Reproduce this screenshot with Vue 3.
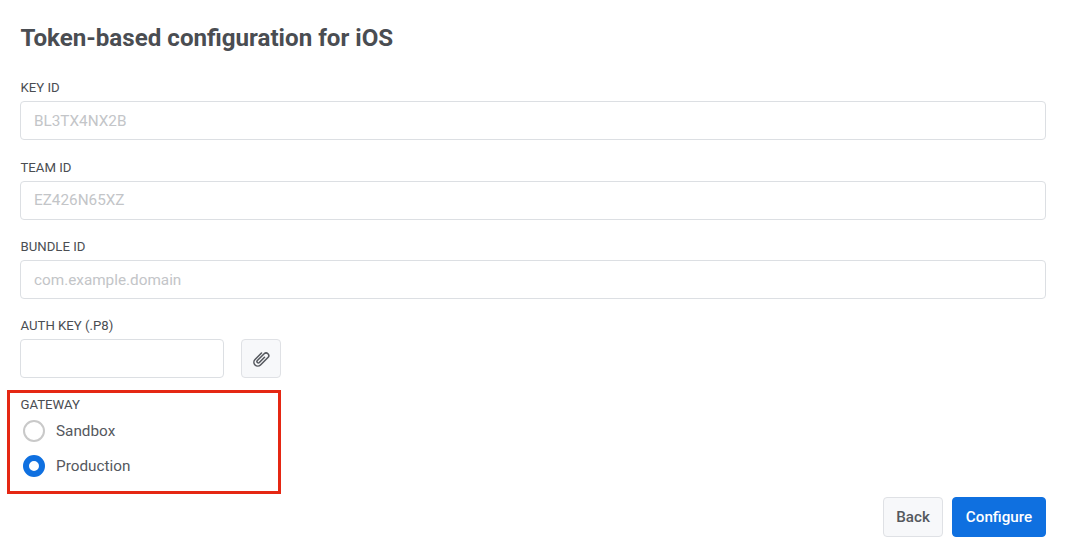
<script setup>
const fields = [
  { label: 'KEY ID', placeholder: 'BL3TX4NX2B' },
  { label: 'TEAM ID', placeholder: 'EZ426N65XZ' },
  { label: 'BUNDLE ID', placeholder: 'com.example.domain' },
]
</script>

<template>
  <div class="page">
    <h1 class="title">Token-based configuration for iOS</h1>
    <div class="field" v-for="f in fields" :key="f.label">
      <label class="label">{{ f.label }}</label>
      <input class="input" type="text" :placeholder="f.placeholder" />
    </div>
    <div class="field">
      <label class="label">AUTH KEY (.P8)</label>
      <div class="auth-row">
        <input class="input auth-input" type="text" />
        <button class="btn attach" type="button" aria-label="Attach">
          <svg width="22" height="22" viewBox="0 0 24 24" fill="none" stroke="#55585e" stroke-width="1.7" stroke-linecap="round" stroke-linejoin="round">
            <path transform="rotate(45 12 12)" d="M7.8 7v10a4.2 4.2 0 0 0 8.4 0V5.5a2.9 2.9 0 0 0-5.8 0V16a1.5 1.5 0 0 0 3 0V8" />
          </svg>
        </button>
      </div>
    </div>
    <div class="gateway">
      <div class="highlight"></div>
      <div class="label gateway-label">GATEWAY</div>
      <div class="radio-row">
        <span class="radio"></span>
        <span class="radio-text">Sandbox</span>
      </div>
      <div class="radio-row">
        <span class="radio checked"></span>
        <span class="radio-text">Production</span>
      </div>
    </div>
    <div class="actions">
      <button class="btn back" type="button">Back</button>
      <button class="btn primary" type="button">Configure</button>
    </div>
  </div>
</template>

<style>
html, body { margin: 0; background: #fff; }
</style>

<style scoped>
.page {
  box-sizing: border-box;
  width: 1069px;
  height: 557px;
  padding: 23px 23px 0 20px;
  font-family: Roboto, "Liberation Sans", sans-serif;
  color: #494c52;
  overflow: hidden;
}
.title {
  margin: 0 0 28.2px;
  padding-left: 0.5px;
  font-size: 24.15px;
  line-height: 30px;
  font-weight: 700;
  color: #4a4d52;
}
.field {
  display: flex;
  flex-direction: column;
  height: 79.4px;
}
.field .label { margin-bottom: 6px; }
.label {
  display: block;
  padding-left: 0.5px;
  font-size: 13.2px;
  line-height: 14px;
  font-weight: 400;
  color: #4a4d52;
}
.input {
  box-sizing: border-box;
  width: 100%;
  height: 39.2px;
  padding: 0 13px;
  border: 1px solid #dcdfe3;
  border-radius: 4px;
  background: #fff;
  font: 400 15.3px Roboto, sans-serif;
  color: #494c52;
  outline: none;
}
.input::placeholder { color: #c3c5c8; opacity: 1; }
.auth-row {
  display: flex;
  gap: 17px;
  height: 39px;
}
.auth-input { width: 204px; height: 39px; }
.btn {
  box-sizing: border-box;
  height: 39.5px;
  border-radius: 4px;
  font: 500 15.2px Roboto, sans-serif;
  cursor: pointer;
}
.attach {
  width: 40px;
  height: 39px;
  display: flex;
  align-items: center;
  justify-content: center;
  padding: 0;
  background: #f7f8fa;
  border: 1px solid #dfe1e5;
}
.gateway {
  position: relative;
  margin-top: -0.6px;
}
.gateway-label { margin-bottom: 1.6px; }
.highlight {
  position: absolute;
  left: -13px;
  top: -8px;
  width: 274px;
  height: 104px;
  box-sizing: border-box;
  border: 3px solid #e52713;
  pointer-events: none;
}
.radio-row {
  display: flex;
  align-items: center;
  gap: 11px;
  height: 35px;
  padding-left: 3px;
}
.radio {
  box-sizing: border-box;
  width: 22px;
  height: 22px;
  border-radius: 50%;
  border: 2px solid #c9c9c9;
  background: #fff;
}
.radio.checked { border: 6.5px solid #0f70e0; }
.radio-text {
  font-size: 15.3px;
  line-height: 20px;
  color: #55585e;
}
.actions {
  display: flex;
  justify-content: flex-end;
  gap: 9px;
  margin-top: 13.5px;
}
.back {
  width: 60px;
  background: #f7f8fa;
  border: 1px solid #dfe1e5;
  color: #55585e;
}
.primary {
  width: 94px;
  background: #0f70e0;
  border: 1px solid #0f70e0;
  color: #fff;
}
</style>
